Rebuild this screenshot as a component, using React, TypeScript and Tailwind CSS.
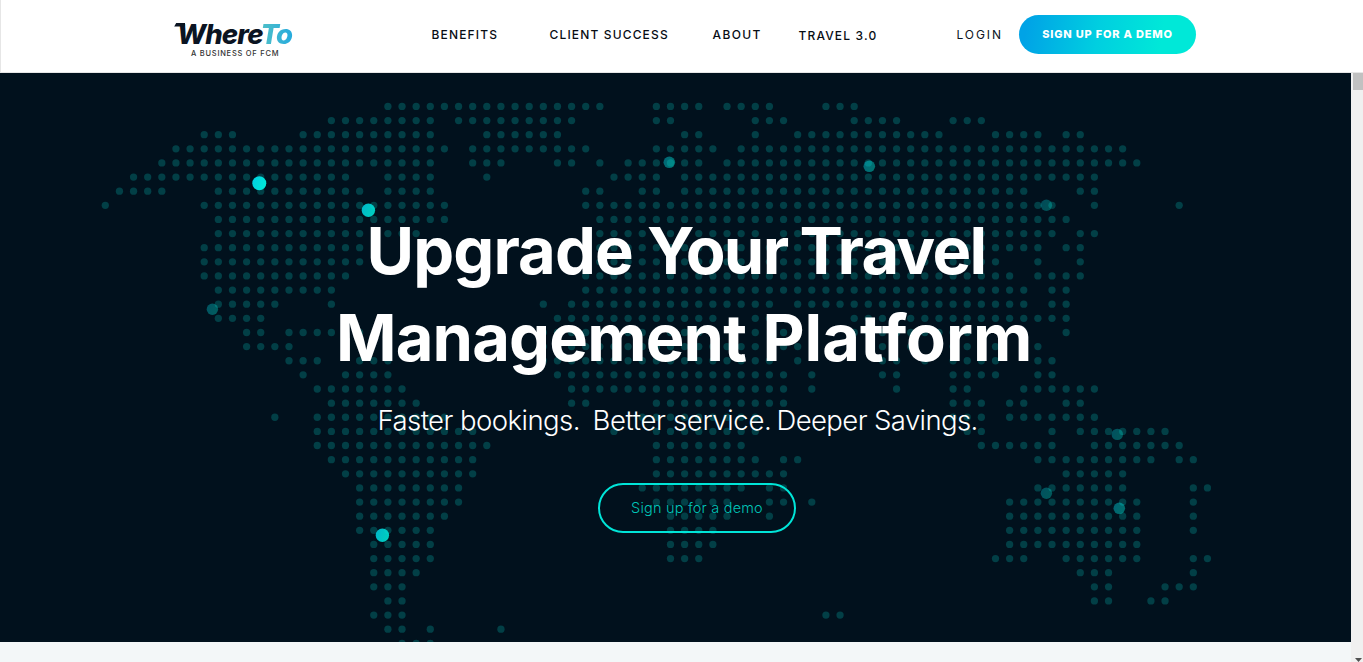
const PITCH = 14.13;
const ORIGIN_X = 105.3;
const ORIGIN_Y = 33.4;

// Each row lists the inclusive column ranges that hold a dot.
const MAP_ROWS = [
  "20-35 39-42 44-47 51-53",
  "16-23 25-33 39-40 46-48 53-56 60-62",
  "7-9 14-23 27-32 41-42 46 49-59 63-66 68-69",
  "5-24 26-34 39-43 45-72",
  "4-23 26-28 32-33 35 37-42 44-73",
  "2-17 20-23 27 36-39 41-70",
  "1-4 8-18 20-23 34-35 38-39 41-65 69-70",
  "0 7-24 34-67 70 76",
  "8-24 35-68",
  "8-18 20-22 35-46 48-67 69-70",
  "7-18 35-66 68-69",
  "7-18 35-63 66 69",
  "7-17 34-64 66-69",
  "8-16 34-65 67-68",
  "8-12 16 31 33-47 49-65 67-68",
  "8-11 32-43 46-48 53-68",
  "10-11 13-16 18 31-43 46 48 53-62 68",
  "10-13 31-46 48-49 55 57 60-63 66",
  "13-15 18-20 31-47 49 55-56 58 60-63 66-67",
  "14 17-20 32-48 50 55-56 60-63 66-67",
  "15-21 33-48 50 56 60-61 65-70",
  "16-22 33-34 39-48 60-62 64-65 68-69",
  "12 15-24 38-46 60-62 64-70",
  "15-26 36 39-46 61-62 67 69-75",
  "15-27 39-45 62-67 70-76",
  "16-26 39-46 48-49 66-74 76-77",
  "17-26 39-48 68-72",
  "18-25 38-45 47-48 66-72 77-78",
  "18-25 39-44 47-48 50 64-73 77",
  "18-24 40-44 47 64-73 77",
  "18-23 40-43 64-73 77",
  "19-23 40-43 64-73",
  "19-23 40-42 63-65 68-73 77-78",
  "19-22 69-71 77",
  "19-21 70-71 75-77",
  "20-21 70-71 74-75",
  "19-21 51-52",
  "20-21 23 28",
  "21-23",
];

const DOTS = MAP_ROWS.flatMap((row, r) =>
  row.split(" ").flatMap((range) => {
    const [from, to = from] = range.split("-").map(Number);
    return Array.from({ length: to - from + 1 }, (_, i) => ({
      x: ORIGIN_X + (from + i) * PITCH,
      y: ORIGIN_Y + r * PITCH,
    }));
  })
);

const PINS = [
  { x: 259.3, y: 110.3, r: 7, o: 1 },
  { x: 368.4, y: 137.3, r: 6.7, o: 0.87 },
  { x: 382.4, y: 462.3, r: 6.7, o: 0.87 },
  { x: 669.3, y: 89.3, r: 5.8, o: 0.45 },
  { x: 869.3, y: 93.3, r: 5.8, o: 0.45 },
  { x: 212.4, y: 236.3, r: 5.7, o: 0.35 },
  { x: 1046.4, y: 132.3, r: 5.7, o: 0.3 },
  { x: 1117.3, y: 361.4, r: 5.7, o: 0.33 },
  { x: 1046.4, y: 420.3, r: 5.7, o: 0.33 },
  { x: 1119.3, y: 435.3, r: 5.8, o: 0.43 },
];

function WorldMap() {
  return (
    <svg className="absolute inset-0" width="1351" height="569" viewBox="0 0 1351 569" aria-hidden="true">
      <defs>
        <linearGradient id="pin" x1="0" y1="0" x2="1" y2="0.4">
          <stop offset="0" stopColor="#00cfe4" />
          <stop offset="1" stopColor="#00e8d8" />
        </linearGradient>
      </defs>
      {DOTS.map((d, i) => (
        <circle key={i} cx={d.x} cy={d.y} r="3.65" fill="#023f46" />
      ))}
      {PINS.map((p, i) => (
        <circle key={i} cx={p.x} cy={p.y} r={p.r} fill="url(#pin)" opacity={p.o} />
      ))}
    </svg>
  );
}

function Logo() {
  return (
    <a className="relative ml-[173px] block h-[72px] w-[122px]">
      <svg className="absolute left-0 top-[22px]" width="12" height="5" viewBox="0 0 12 5" aria-hidden="true">
        <path d="M2.2 1H11V4.6H0.2Z" fill="#0b1422" />
      </svg>
      <span className="block whitespace-nowrap pl-[3px] pt-[19px] font-['Inter'] text-[27.5px] font-extrabold italic leading-[30px] tracking-[-0.9px] text-[#0b1422]">
        Where
        <span className="bg-linear-to-r from-[#4fc0c6] to-[#1fa8e0] bg-clip-text pr-1 text-transparent">To</span>
      </span>
      <span className="block whitespace-nowrap pl-[17px] font-['Inter'] text-[7.5px] leading-[9px] tracking-[0.75px] text-[#333]">
        A BUSINESS OF FCM
      </span>
    </a>
  );
}

function Header() {
  return (
    <header className="flex h-[73px] border-b border-l border-[#e6e6e6] bg-white font-['Inter'] text-[12px] font-medium leading-[16px] text-[#080d14]">
      <Logo />
      <nav className="flex whitespace-nowrap pt-[27px]">
        <a className="ml-[135.5px] w-[118px] tracking-[1.15px]">BENEFITS</a>
        <a className="w-[163px] tracking-[1.15px]">CLIENT SUCCESS</a>
        <a className="w-[86px] tracking-[1.4px]">ABOUT</a>
        <a className="w-[158px] pt-px tracking-[1.15px]">TRAVEL 3.0</a>
        <a className="w-[62.5px] font-normal tracking-[1.9px] text-[#0b1422]">LOGIN</a>
      </nav>
      <a className="mt-[15px] flex h-[39px] w-[177px] items-center justify-center whitespace-nowrap rounded-full bg-[linear-gradient(100deg,#00a3e6_5%,#00cfe0_45%,#00e8d8_80%)] pb-[2px] text-[11px] font-extrabold tracking-[0.8px] text-white">
        SIGN UP FOR A DEMO
      </a>
    </header>
  );
}

function Hero() {
  return (
    <section className="relative h-[569px] w-[1351px] overflow-hidden bg-[#01111d]">
      <WorldMap />
      <div className="relative pt-[134px]">
        <h1 className="whitespace-nowrap font-['Inter'] text-[65px] font-bold leading-[87px] text-white">
          <span className="flex pl-[366.5px]">
            <span className="w-[280.5px] tracking-[-0.9px]">Upgrade</span>{" "}
            <span className="w-[152.5px] tracking-[-1.7px]">Your</span>{" "}
            <span className="tracking-[-1.7px]">Travel</span>
          </span>
          <span className="flex pl-[336px]">
            <span className="w-[426.5px] tracking-[-0.85px]">Management</span>{" "}
            <span className="tracking-[-0.01px]">Platform</span>
          </span>
        </h1>
        <p className="mt-[22px] flex whitespace-nowrap pl-[377.5px] font-['Inter'] text-[27.5px] font-light leading-[34px] text-white">
          <span className="w-[215px] tracking-[-0.55px]">Faster bookings.</span>{" "}
          <span className="w-[184px] tracking-[-0.35px]">Better service.</span>{" "}
          <span className="tracking-[-0.6px]">Deeper Savings.</span>
        </p>
        <a className="ml-[598px] mt-[46px] flex h-[50px] w-[198px] items-center justify-center whitespace-nowrap rounded-full border-2 border-[#00e5d8] font-['Inter'] text-[14.5px] font-light tracking-[0.2px] text-[#00c4b8]">
          Sign up for a demo
        </a>
      </div>
    </section>
  );
}

function Scrollbar() {
  return (
    <div className="flex w-3 flex-col items-end justify-between bg-[#f0f0f0]">
      <div className="h-[17px] w-[10px] bg-[#c1c1c1]" />
      <svg width="10" height="4" viewBox="0 0 10 4" aria-hidden="true">
        <path d="M2 0H9L5.5 4Z" fill="#505050" />
      </svg>
    </div>
  );
}

export default function App() {
  return (
    <div className="flex h-[662px] w-[1363px] flex-col overflow-hidden bg-white">
      <Header />
      <div className="flex h-[589px]">
        <main className="w-[1351px] bg-[#f3f7f8]">
          <Hero />
        </main>
        <Scrollbar />
      </div>
    </div>
  );
}
